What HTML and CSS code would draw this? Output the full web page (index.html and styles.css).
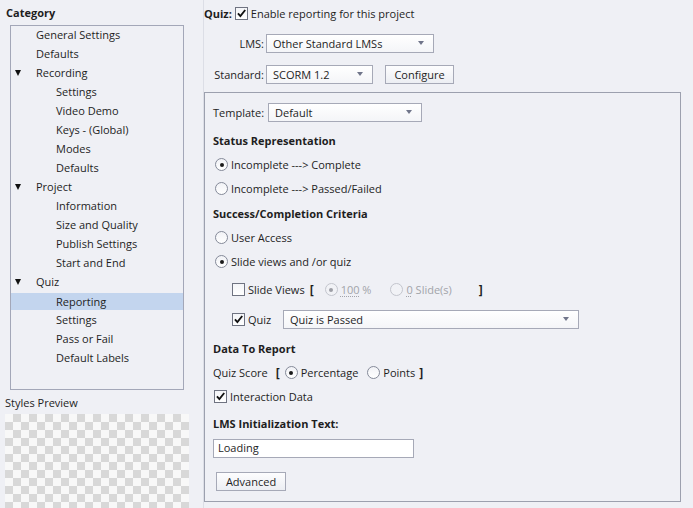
FILE: index.html
```html
<!DOCTYPE html>
<html>
<head>
<meta charset="utf-8">
<link rel="stylesheet" href="styles.css">
</head>
<body>
<div class="app">
  <aside class="side">
    <div class="side-title">Category</div>
    <ul class="tree">
      <li class="row"><span class="tw"></span>General Settings</li>
      <li class="row"><span class="tw"></span>Defaults</li>
      <li class="row"><span class="tw"><i class="tri"></i></span>Recording</li>
      <li class="row"><span class="tw tw2"></span>Settings</li>
      <li class="row"><span class="tw tw2"></span>Video Demo</li>
      <li class="row"><span class="tw tw2"></span>Keys - (Global)</li>
      <li class="row"><span class="tw tw2"></span>Modes</li>
      <li class="row"><span class="tw tw2"></span>Defaults</li>
      <li class="row"><span class="tw"><i class="tri"></i></span>Project</li>
      <li class="row"><span class="tw tw2"></span>Information</li>
      <li class="row"><span class="tw tw2"></span>Size and Quality</li>
      <li class="row"><span class="tw tw2"></span>Publish Settings</li>
      <li class="row"><span class="tw tw2"></span>Start and End</li>
      <li class="row"><span class="tw"><i class="tri"></i></span>Quiz</li>
      <li class="row sel"><span class="tw tw2"></span>Reporting</li>
      <li class="row"><span class="tw tw2"></span>Settings</li>
      <li class="row"><span class="tw tw2"></span>Pass or Fail</li>
      <li class="row"><span class="tw tw2"></span>Default Labels</li>
    </ul>
    <div class="preview-label">Styles Preview</div>
    <div class="preview"></div>
  </aside>

  <main class="main">
    <div class="top-row">
      <b class="quiz-label">Quiz:</b>
      <span class="cb checked"><svg viewBox="0 0 13 13"><path d="M2.3 6.3 L5.2 9.6 L10.9 2.4" fill="none" stroke="#111" stroke-width="2.2"/></svg></span>
      <span class="cb-text">Enable reporting for this project</span>
    </div>
    <div class="field-row lms-row">
      <span class="flabel">LMS:</span>
      <div class="select w-lms"><span>Other Standard LMSs</span><i class="arrow"></i></div>
    </div>
    <div class="field-row std-row">
      <span class="flabel">Standard:</span>
      <div class="select w-std"><span>SCORM 1.2</span><i class="arrow"></i></div>
      <div class="btn btn-config">Configure</div>
    </div>

    <section class="group">
      <div class="field-row tpl-row">
        <span class="tlabel">Template:</span>
        <div class="select w-tpl"><span>Default</span><i class="arrow"></i></div>
      </div>

      <div class="heading h-status">Status Representation</div>
      <div class="opt first"><span class="rb on"></span>Incomplete ---&gt; Complete</div>
      <div class="opt"><span class="rb"></span>Incomplete ---&gt; Passed/Failed</div>

      <div class="heading h-success">Success/Completion Criteria</div>
      <div class="opt first"><span class="rb"></span>User Access</div>
      <div class="opt"><span class="rb on"></span>Slide views and /or quiz</div>

      <div class="opt sub slide-row">
        <span class="cb"></span><span class="cb-text">Slide Views</span>
        <span class="br br-open">[</span>
        <span class="rb on dis"></span><span class="dis-text"><u>100</u> %</span>
        <span class="rb dis r-slides"></span><span class="dis-text"><u>0</u> Slide(s)</span>
        <span class="br br-close">]</span>
      </div>
      <div class="opt sub quiz-row">
        <span class="cb checked"><svg viewBox="0 0 13 13"><path d="M2.3 6.3 L5.2 9.6 L10.9 2.4" fill="none" stroke="#111" stroke-width="2.2"/></svg></span><span class="cb-text q-text">Quiz</span>
        <div class="select w-quiz"><span>Quiz is Passed</span><i class="arrow"></i></div>
      </div>

      <div class="heading h-data">Data To Report</div>
      <div class="opt first score-row">
        <span>Quiz Score</span>
        <span class="br br-s1">[</span>
        <span class="rb on"></span><span>Percentage</span>
        <span class="rb r-points"></span><span>Points</span>
        <span class="br br-s2">]</span>
      </div>
      <div class="opt"><span class="cb checked cb-int"><svg viewBox="0 0 13 13"><path d="M2.3 6.3 L5.2 9.6 L10.9 2.4" fill="none" stroke="#111" stroke-width="2.2"/></svg></span><span class="cb-text">Interaction Data</span></div>

      <div class="heading h-init">LMS Initialization Text:</div>
      <div class="input">Loading</div>
      <div class="btn btn-adv">Advanced</div>
    </section>
  </main>
</div>
</body>
</html>
```

FILE: styles.css
```css
* { box-sizing: border-box; }
html, body { margin: 0; padding: 0; }
body {
  background: #eff0f5;
  font-family: "Open Sans", "Noto Sans", sans-serif;
  font-size: 11px;
  color: #1e1e1e;
  width: 693px;
  height: 508px;
  overflow: hidden;
}
.app { display: flex; height: 508px; }

/* ---------- left side ---------- */
.side {
  width: 204px;
  flex: none;
  border-right: 1px solid #dcdee6;
  display: flex;
  flex-direction: column;
}
.side-title {
  font-weight: bold;
  padding: 5px 0 0 6px;
  line-height: 16px;
  height: 22px;
}
.tree {
  list-style: none;
  margin: 3px 0 0 10px;
  padding: 0;
  width: 174px;
  height: 365px;
  border: 1px solid #a3a7b8;
  background: #eff0f5;
}
.row {
  height: 19px;
  padding-bottom: 2px;
  display: flex;
  align-items: center;
  white-space: nowrap;
}
.row.sel {
  background: #c3d5ee;
  height: 17px;
  padding-bottom: 1px;
  margin: 1px 0;
}
.tw {
  width: 25px;
  flex: none;
  display: flex;
  align-items: center;
  padding-left: 4px;
}
.tw2 { width: 45px; }
.tri {
  display: block;
  width: 0;
  height: 0;
  border-left: 3.5px solid transparent;
  border-right: 3.5px solid transparent;
  border-top: 6px solid #111;
}
.preview-label {
  margin: 5px 0 0 5px;
  line-height: 16px;
  height: 16px;
}
.preview {
  margin: 3px 0 0 5px;
  width: 184px;
  flex: 1;
  background: repeating-conic-gradient(#d8d8d8 0 25%, #f8f8f8 0 50%) 0 0 / 16px 16px;
}

/* ---------- main ---------- */
.main {
  flex: 1;
  display: flex;
  flex-direction: column;
}
.top-row {
  height: 26px;
  display: flex;
  align-items: center;
}
.quiz-label { font-weight: bold; margin-right: 3px; }
.cb {
  width: 13px;
  height: 13px;
  flex: none;
  border: 1px solid #6f7381;
  background: linear-gradient(#f4f5f8, #ffffff);
  display: inline-flex;
}
.cb svg { width: 11px; height: 11px; }
.cb-text { margin-left: 3px; }

.field-row { display: flex; align-items: center; height: 19px; }
.lms-row { margin-top: 8px; }
.std-row { margin-top: 12px; }
.flabel { width: 62px; text-align: right; padding-right: 2px; padding-bottom: 1px; }

.select {
  height: 19px;
  border: 1px solid #a6a9b7;
  background: linear-gradient(#ffffff, #f4f5f8);
  display: flex;
  align-items: center;
  justify-content: space-between;
  padding: 0 9px 1px 6px;
  flex: none;
}
.arrow {
  display: block;
  width: 0;
  height: 0;
  border-left: 3.5px solid transparent;
  border-right: 3.5px solid transparent;
  border-top: 4px solid #70758a;
}
.w-lms { width: 168px; }
.w-std { width: 107px; }
.w-tpl { width: 154px; }
.w-quiz { width: 296px; }

.btn {
  height: 19px;
  border: 1px solid #a6a9b7;
  background: linear-gradient(#fdfdfe, #eceef3);
  display: flex;
  align-items: center;
  justify-content: center;
  padding-bottom: 1px;
  flex: none;
}
.btn-config { width: 69px; margin-left: 12px; }

.group {
  margin-top: 8px;
  width: 477px;
  height: 410px;
  border: 1px solid #9ca0ae;
  padding: 10px 8px 0 8px;
  display: flex;
  flex-direction: column;
}
.tlabel { width: 55px; padding-bottom: 1px; }

.heading {
  font-weight: bold;
  height: 18px;
  line-height: 18px;
}
.h-status { margin-top: 10px; }
.h-success { margin-top: 4px; }
.h-data { margin-top: 8px; }
.h-init { margin-top: 6px; }

.opt {
  height: 24px;
  display: flex;
  align-items: center;
  white-space: nowrap;
  padding-bottom: 1px;
}
.opt.first { margin-top: 3px; }
.rb {
  width: 13px;
  height: 13px;
  flex: none;
  border-radius: 50%;
  border: 1px solid #858a99;
  background: linear-gradient(#f1f2f6, #ffffff);
  margin: 0 3px 0 2px;
  position: relative;
}
.rb.on::after {
  content: "";
  position: absolute;
  left: 3.5px;
  top: 3.5px;
  width: 4px;
  height: 4px;
  border-radius: 50%;
  background: #1a1a1a;
}
.rb.dis { border-color: #c3c5cd; background: #f1f2f6; }
.rb.dis.on::after { background: #9d9fa6; }
.dis-text { color: #a2a4aa; }
.dis-text u { text-decoration: underline dotted; text-underline-offset: 2px; }

.sub { padding-left: 19px; }
.slide-row { margin-top: 4px; }
.quiz-row { margin-top: 6px; }
.br { font-weight: bold; font-size: 12px; }
.br-open { margin: 0 9px 0 5px; }
.r-slides { margin-left: 19px; }
.br-close { margin-left: 27px; }
.q-text { width: 35px; }

.br-s1 { margin: 0 3px 0 8px; }
.r-points { margin-left: 9px; }
.br-s2 { margin-left: 4px; }
.cb-int { margin-left: 1px; }

.input {
  margin-top: 6px;
  width: 201px;
  height: 19px;
  border: 1px solid #a6a9b7;
  background: #fff;
  padding-left: 4px;
  line-height: 16px;
  flex: none;
}
.btn-adv { margin: 14px 0 0 3px; width: 70px; }
```
